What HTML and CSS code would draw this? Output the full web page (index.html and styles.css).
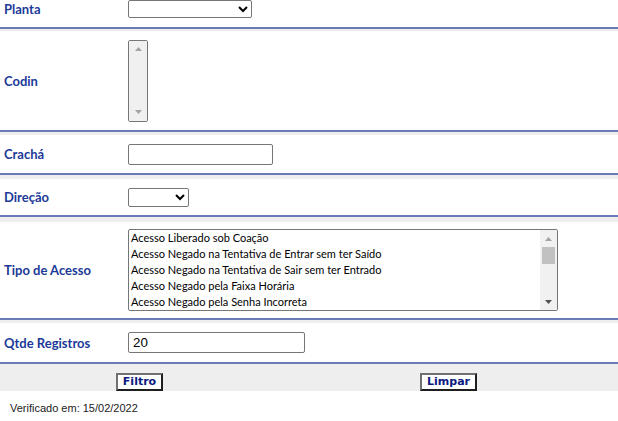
FILE: index.html
```html
<!DOCTYPE html>
<html lang="pt-BR">
<head>
<meta charset="utf-8">
<title>Filtro de Acessos</title>
<link rel="stylesheet" href="styles.css">
</head>
<body>
<div class="form">
  <div class="row row-planta">
    <label class="lbl">Planta</label>
    <div class="ctl"><select class="sel sel-planta"><option></option></select></div>
  </div>
  <div class="row row-codin">
    <label class="lbl">Codin</label>
    <div class="ctl">
      <div class="listbox listbox-codin">
        <div class="sbar sbar-full">
          <div class="sbtn"><svg width="7" height="4" viewBox="0 0 7 4"><path d="M0 4 L3.5 0 L7 4 Z" fill="#a3a3a3"/></svg></div>
          <div class="track"></div>
          <div class="sbtn"><svg width="7" height="4" viewBox="0 0 7 4"><path d="M0 0 L7 0 L3.5 4 Z" fill="#a3a3a3"/></svg></div>
        </div>
      </div>
    </div>
  </div>
  <div class="row row-cracha">
    <label class="lbl">Crachá</label>
    <div class="ctl"><input class="txt txt-cracha" type="text"></div>
  </div>
  <div class="row row-direcao">
    <label class="lbl">Direção</label>
    <div class="ctl"><select class="sel sel-direcao"><option></option></select></div>
  </div>
  <div class="row row-tipo">
    <label class="lbl">Tipo de Acesso</label>
    <div class="ctl">
      <div class="listbox listbox-tipo" role="listbox" aria-multiselectable="true">
        <ul class="opts">
          <li role="option">Acesso Liberado sob Coação</li>
          <li role="option">Acesso Negado na Tentativa de Entrar sem ter Saído</li>
          <li role="option">Acesso Negado na Tentativa de Sair sem ter Entrado</li>
          <li role="option">Acesso Negado pela Faixa Horária</li>
          <li role="option">Acesso Negado pela Senha Incorreta</li>
        </ul>
        <div class="sbar">
          <div class="sbtn"><svg width="7" height="4" viewBox="0 0 7 4"><path d="M0 4 L3.5 0 L7 4 Z" fill="#a3a3a3"/></svg></div>
          <div class="track"><div class="thumb"></div></div>
          <div class="sbtn"><svg width="7" height="4" viewBox="0 0 7 4"><path d="M0 0 L7 0 L3.5 4 Z" fill="#505050"/></svg></div>
        </div>
      </div>
    </div>
  </div>
  <div class="row row-qtde">
    <label class="lbl">Qtde Registros</label>
    <div class="ctl"><input class="txt txt-qtde" type="text" value="20"></div>
  </div>
  <div class="actions">
    <div class="act"><button class="btn" type="button">Filtro</button></div>
    <div class="act"><button class="btn" type="button">Limpar</button></div>
  </div>
</div>
<p class="footer">Verificado em: 15/02/2022</p>
</body>
</html>
```
FILE: styles.css
```css
html, body {
  margin: 0;
  padding: 0;
  background: #ffffff;
}

.form {
  background: #eeeeee;
  display: flex;
  flex-direction: column;
}

.row {
  display: grid;
  grid-template-columns: 128px 1fr;
  align-items: center;
  background: #ffffff;
  border-bottom: 2px solid #6b7bb8;
  margin-bottom: 3px;
  box-sizing: border-box;
}

.row-planta { height: 29px; padding-bottom: 9px; margin-bottom: 2px; }
.row-codin { height: 101px; margin-bottom: 3px; }
.row-cracha { height: 40px; margin-bottom: 4px; }
.row-direcao { height: 38px; margin-bottom: 5px; }
.row-tipo { height: 98px; margin-bottom: 3px; }
.row-qtde { height: 41px; margin-bottom: 0; }

.lbl {
  padding-left: 4px;
  font-family: Lato, "Open Sans", sans-serif;
  font-weight: bold;
  font-size: 13px;
  color: #1c3a98;
}

.ctl {
  display: flex;
  align-items: center;
}

.sel {
  height: 19px;
  font-family: "Liberation Sans", Arial, sans-serif;
  font-size: 13px;
  border: 1px solid #767676;
  border-radius: 2px;
  background: #ffffff;
  margin: 0;
}
.sel-planta { width: 124px; height: 18px; }
.sel-direcao { width: 61px; }

.listbox {
  display: flex;
  height: 82px;
  box-sizing: border-box;
  border: 1px solid #767676;
  border-radius: 2px;
  background: #ffffff;
  overflow: hidden;
}
.listbox-codin { width: 20px; }
.listbox-tipo { width: 430px; }

.opts {
  flex: 1;
  margin: 0;
  padding: 0;
  list-style: none;
  overflow: hidden;
  font-family: Lato, "Noto Sans", sans-serif;
  font-size: 11px;
  color: #000000;
}
.opts li {
  height: 16px;
  line-height: 16px;
  padding: 0 2px;
  white-space: nowrap;
}

.sbar {
  width: 17px;
  display: flex;
  flex-direction: column;
  background: #f1f1f1;
}
.sbar-full { flex: 1; background: #f0f0f0; }
.sbtn {
  height: 17px;
  flex: none;
  display: flex;
  align-items: center;
  justify-content: center;
}
.track {
  flex: 1;
}
.thumb {
  height: 17px;
  margin: 0 2px;
  background: #c1c1c1;
}

.txt {
  height: 21px;
  box-sizing: border-box;
  border: 1px solid #767676;
  border-radius: 2px;
  font-family: "Liberation Sans", Arial, sans-serif;
  font-size: 13.33px;
  padding: 1px 4px;
  margin: 0;
}
.txt-cracha { width: 145px; }
.txt-qtde { width: 177px; }

.actions {
  display: grid;
  grid-template-columns: 279px 1fr;
  padding: 9px 0 0;
  height: 27px;
  box-sizing: border-box;
}
.act {
  display: flex;
  justify-content: center;
}

.btn {
  height: 18px;
  box-sizing: border-box;
  background: #ffffff;
  border: 2px solid;
  border-color: #707070 #1e1e1e #1e1e1e #707070;
  border-radius: 0;
  padding: 0 5px;
  font-family: "DejaVu Sans", Verdana, sans-serif;
  font-weight: bold;
  font-size: 11px;
  line-height: 12px;
  color: #0a1a80;
}

.footer {
  margin: 0;
  padding: 11px 0 0 10px;
  font-family: "Liberation Sans", Arial, sans-serif;
  font-size: 11px;
  color: #222222;
}
```
